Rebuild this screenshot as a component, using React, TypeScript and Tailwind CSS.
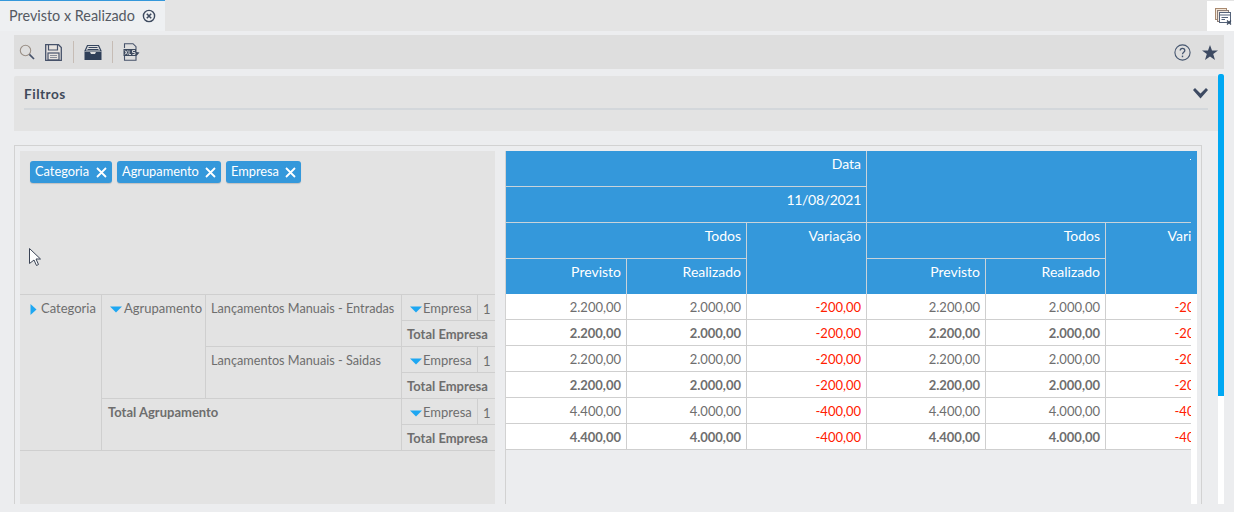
import React from 'react';

const lineCell = 'border-r border-b border-[#cfcfcf]';

function TriRight() {
    return <svg width="7" height="11" viewBox="0 0 7 11" className="inline-block shrink-0"><path d="M0.5 0 L6.5 5.5 L0.5 11 Z" fill="#1ea7f2" /></svg>;
}

function TriDown() {
    return <svg width="12" height="7" viewBox="0 0 12 7" className="inline-block shrink-0"><path d="M0 0.5 H12 L6 6.5 Z" fill="#1ea7f2" /></svg>;
}

function Tag({ label, width }: { label: string; width: string }) {
    return (
        <div className={`${width} h-[22px] flex items-center justify-between pl-[5px] pr-[5px] rounded-[3px] bg-[#3498db] text-white text-[12.8px] shadow-[0_1px_1px_rgba(0,0,0,0.15)]`}>
            <span>{label}</span>
            <svg width="11" height="11" viewBox="0 0 11 11"><path d="M1 1 L10 10 M10 1 L1 10" stroke="#fff" strokeWidth="1.8" /></svg>
        </div>
    );
}

function PivotEmpresa() {
    return (
        <>
            <td className={`${lineCell} pl-[8px] align-top pt-[6px]`}>
                <div className="flex items-center gap-[1px] h-[16px]"><TriDown /><span>Empresa</span></div>
            </td>
            <td className="border-b border-[#cfcfcf] pl-[5px] align-top pt-[6px]"><div className="h-[16px] leading-[16px]">1</div></td>
        </>
    );
}

function TotalEmpresa() {
    return <td colSpan={2} className="border-b border-[#cfcfcf] pl-[5px] align-top pt-[5px] font-bold whitespace-nowrap overflow-hidden"><div className="h-[16px] leading-[16px]">Total Empresa</div></td>;
}

const rows = [
    { p: '2.200,00', r: '2.000,00', v: '-200,00', bold: false },
    { p: '2.200,00', r: '2.000,00', v: '-200,00', bold: true },
    { p: '2.200,00', r: '2.000,00', v: '-200,00', bold: false },
    { p: '2.200,00', r: '2.000,00', v: '-200,00', bold: true },
    { p: '4.400,00', r: '4.000,00', v: '-400,00', bold: false },
    { p: '4.400,00', r: '4.000,00', v: '-400,00', bold: true },
];

export default function App() {
    const head = 'border-r border-b border-[#c9d3da] text-right align-top pr-[5px] pt-[2px] font-normal';
    const head4 = 'border-r border-[#c9d3da] text-right align-top pr-[5px] pt-[2px] font-normal';
    const data = `${lineCell} text-right pr-[5px] align-top pt-[4px] whitespace-nowrap`;

    return (
        <div className="w-[1234px] h-[512px] overflow-hidden bg-[#ecedef] text-[#6e6e6e] text-[13px] font-['Lato','Open_Sans',sans-serif]">
            {/* Tabs */}
            <div className="h-[31px] flex justify-between bg-[#e4e4e4]">
                <div className="w-[165px] h-[31px] bg-[#eef0f2] border-t border-[#3498db] flex items-center pl-[9px] gap-[7px] text-[14.4px] text-[#555a63]">
                    <span>Previsto x Realizado</span>
                    <svg width="14" height="14" viewBox="0 0 14 14"><circle cx="7" cy="7" r="5.6" fill="none" stroke="#3d4a5f" strokeWidth="1.4" /><path d="M4.8 4.8 L9.2 9.2 M9.2 4.8 L4.8 9.2" stroke="#3d4a5f" strokeWidth="1.6" /></svg>
                </div>
                <div className="w-[27px] h-[30px] mt-px bg-white flex items-center pl-[8px]">
                    <svg width="17" height="17" viewBox="0 0 17 17" fill="none">
                        <rect x="0.5" y="0.5" width="11" height="11" fill="#f3e6d8" stroke="#a8896f" />
                        <rect x="2.5" y="2.5" width="11" height="11" fill="#efe5dc" stroke="#8d7f78" />
                        <rect x="4.5" y="4.5" width="11" height="10" fill="#fff" stroke="#55637a" />
                        <path d="M4.5 7 H15.5 M6.5 9.5 H13 M6.5 11.5 H10" stroke="#55637a" />
                        <path d="M12 12.5 L16 16.5 M16 12.5 L12 16.5" stroke="#3d4a5f" strokeWidth="1.3" />
                    </svg>
                </div>
            </div>

            {/* Toolbar */}
            <div className="mt-[4px] ml-[14px] w-[1210px] h-[34px] bg-[#dedede] flex items-center pl-[5px] pr-[6px]">
                <svg width="16" height="16" viewBox="0 0 16 16" fill="none"><circle cx="6.5" cy="6.5" r="5.2" stroke="#9a8f86" strokeWidth="1.1" /><path d="M10.4 10.4 L15 15" stroke="#46526a" strokeWidth="1.7" /></svg>
                <svg width="17" height="17" viewBox="0 0 17 17" fill="none" className="ml-[10px]">
                    <path d="M0.7 0.7 H13.5 L16.3 3.5 V16.3 H0.7 Z" stroke="#46526a" strokeWidth="1.3" fill="#e8e4e0" />
                    <path d="M3.5 1 V6 H12.5 V1" stroke="#46526a" strokeWidth="1.2" />
                    <rect x="3" y="9" width="11" height="7" stroke="#46526a" strokeWidth="1.2" />
                    <path d="M5 11.5 H12 M5 13.5 H12" stroke="#8a8f9a" />
                </svg>
                <div className="w-px h-[22px] bg-[#c6bcb5] ml-[11px]"></div>
                <svg width="18" height="15" viewBox="0 0 18 15" className="ml-[10px]">
                    <path d="M3.5 0.5 H14.5 L17 6 H1 Z" fill="none" stroke="#36465f" strokeWidth="1.2" />
                    <path d="M4.5 2.5 H13.5 M3.5 4.5 H14.5" stroke="#36465f" strokeWidth="1.1" />
                    <path d="M0.5 7 H6 L7 9 H11 L12 7 H17.5 V15 H0.5 Z" fill="#2f3f58" />
                </svg>
                <div className="w-px h-[22px] bg-[#c6bcb5] ml-[10px]"></div>
                <svg width="17" height="18" viewBox="0 0 17 18" fill="none" className="ml-[10px]">
                    <path d="M1.5 5 V0.7 H10 L13 3.7 V6 M13 13 V17.3 H1.5 V13" stroke="#46526a" strokeWidth="1.1" />
                    <path d="M0.5 6 H13.5 V9 L16.5 9.5 L13.5 13 H0.5 Z" fill="#3d4a5f" />
                    <path d="M2 7.5 L4.5 11.5 M4.5 7.5 L2 11.5 M6 7.5 V11.5 H8 M12 7.5 H9.5 V9.5 H12 V11.5 H9.5" stroke="#e4e4e4" strokeWidth="0.9" />
                </svg>
                <div className="ml-auto flex items-center gap-[11px]">
                    <svg width="17" height="17" viewBox="0 0 17 17" fill="none"><circle cx="8.5" cy="8.5" r="7.6" stroke="#46566f" strokeWidth="1.1" /><path d="M6.2 6.6 C6.2 3.7 10.8 3.7 10.8 6.4 C10.8 8.2 8.5 8.2 8.5 10.2" stroke="#46566f" strokeWidth="1.3" /><rect x="7.8" y="11.6" width="1.4" height="1.6" fill="#46566f" /></svg>
                    <svg width="16" height="15" viewBox="0 0 16 15"><path d="M8 0 L10 5.5 H16 L11.2 9 L13 15 L8 11.4 L3 15 L4.8 9 L0 5.5 H6 Z" fill="#3d4a62" /></svg>
                </div>
            </div>

            <div className="mt-[5px] ml-[14px] flex">
                <div className="w-[1204px]">
                    {/* Filtros */}
                    <div className="mt-[2px] h-[55px] bg-[#e3e3e3] rounded-t-[2px] pl-[10px] pr-[10px] pt-[10px]">
                        <div className="h-[24px] border-b-[2px] border-[#d3d7db] flex justify-between text-[#3f4a5a] font-bold text-[13.6px] tracking-[0.5px]">
                            <span className="leading-[16px]">Filtros</span>
                            <svg width="15" height="11" viewBox="0 0 15 11" className="mt-[2px]"><path d="M0 2 L2 0 L7.5 5.5 L13 0 L15 2 L7.5 10.5 Z" fill="#3d4a62" /></svg>
                        </div>
                    </div>

                    {/* Pivot */}
                    <div className="mt-[14px] w-[1188px] h-[359px] border-l border-r border-t border-[#d2d2d2] pt-[5px] pl-[5px] flex">
                        <div className="relative w-[475px] h-[353px] bg-[#e3e3e3] shrink-0">
                            <div className="h-[144px] pt-[10px] pl-[10px] flex items-start gap-[5px] border-b border-[#cfcfcf]">
                                <Tag label="Categoria" width="w-[82px]" />
                                <Tag label="Agrupamento" width="w-[104px]" />
                                <Tag label="Empresa" width="w-[75px]" />
                            </div>
                            {/* mouse cursor in the shot */}
                            <svg width="13" height="19" viewBox="0 0 13 19" className="absolute left-[9px] top-[97px]"><path d="M0.5 0.5 L11.5 11 H7 L9.5 16.5 L7.5 17.5 L5 12 L0.5 15.5 Z" fill="#fff" stroke="#3a4354" /></svg>
                            <table className="table-fixed border-separate border-spacing-0 w-[475px]">
                                <colgroup>
                                    <col className="w-[82px]" />
                                    <col className="w-[104px]" />
                                    <col className="w-[196px]" />
                                    <col className="w-[76px]" />
                                    <col className="w-[17px]" />
                                </colgroup>
                                <tbody>
                                    <tr className="h-[26px]">
                                        <td rowSpan={6} className={`${lineCell} align-top pl-[10px] pt-[6px]`}>
                                            <div className="flex items-center gap-[4px] h-[16px]"><TriRight /><span>Categoria</span></div>
                                        </td>
                                        <td rowSpan={4} className={`${lineCell} align-top pl-[8px] pt-[6px]`}>
                                            <div className="flex items-center gap-[2px] h-[16px] whitespace-nowrap"><TriDown /><span>Agrupamento</span></div>
                                        </td>
                                        <td rowSpan={2} className={`${lineCell} align-top pl-[5px] pt-[4px] whitespace-nowrap text-[12.7px]`}>Lançamentos Manuais - Entradas</td>
                                        <PivotEmpresa />
                                    </tr>
                                    <tr className="h-[26px]"><TotalEmpresa /></tr>
                                    <tr className="h-[26px]">
                                        <td rowSpan={2} className={`${lineCell} align-top pl-[5px] pt-[4px] whitespace-nowrap text-[12.7px]`}>Lançamentos Manuais - Saidas</td>
                                        <PivotEmpresa />
                                    </tr>
                                    <tr className="h-[26px]"><TotalEmpresa /></tr>
                                    <tr className="h-[26px]">
                                        <td colSpan={2} rowSpan={2} className={`${lineCell} align-top pl-[6px] pt-[4px] font-bold`}>Total Agrupamento</td>
                                        <PivotEmpresa />
                                    </tr>
                                    <tr className="h-[26px]"><TotalEmpresa /></tr>
                                </tbody>
                            </table>
                        </div>

                        {/* Values */}
                        <div className="ml-[10px] w-[692px] h-[353px] border-l border-[#d2d2d2] flex shrink-0">
                            <div className="w-[685px] overflow-hidden">
                                <table className="relative table-fixed border-separate border-spacing-0 w-[720px] text-[14px]">
                                    <colgroup>
                                        <col className="w-[121px]" />
                                        <col className="w-[120px]" />
                                        <col className="w-[120px]" />
                                        <col className="w-[119px]" />
                                        <col className="w-[120px]" />
                                        <col className="w-[120px]" />
                                    </colgroup>
                                    <thead className="bg-[#3498db] text-white">
                                        <tr className="h-[36px]">
                                            <th colSpan={3} className={head}>Data</th>
                                            <th colSpan={3} rowSpan={2} className="border-b border-[#c9d3da]">
                                                <span className="absolute left-[684px] top-[8px] w-px h-px bg-white"></span>
                                            </th>
                                        </tr>
                                        <tr className="h-[36px]">
                                            <th colSpan={3} className={`${head} tracking-[-0.3px]`}>11/08/2021</th>
                                        </tr>
                                        <tr className="h-[36px]">
                                            <th colSpan={2} className={head}>Todos</th>
                                            <th rowSpan={2} className={head4}>Variação</th>
                                            <th colSpan={2} className={head}>Todos</th>
                                            <th rowSpan={2} className={head4}>Variação</th>
                                        </tr>
                                        <tr className="h-[35px]">
                                            <th className={head4}>Previsto</th>
                                            <th className={head4}>Realizado</th>
                                            <th className={head4}>Previsto</th>
                                            <th className={head4}>Realizado</th>
                                        </tr>
                                    </thead>
                                    <tbody className="bg-white text-[13px]">
                                        {rows.map((r, i) => (
                                            <tr key={i} className={`h-[26px] ${r.bold ? 'font-bold' : ''}`}>
                                                <td className={data}>{r.p}</td>
                                                <td className={data}>{r.r}</td>
                                                <td className={`${data} font-normal text-[#ff2000]`}>{r.v}</td>
                                                <td className={data}>{r.p}</td>
                                                <td className={data}>{r.r}</td>
                                                <td className={`${data} font-normal text-[#ff2000]`}>{r.v}</td>
                                            </tr>
                                        ))}
                                    </tbody>
                                </table>
                            </div>
                            <div className="w-[6px] flex flex-col">
                                <div className="h-[143px] bg-[#3498db]"></div>
                                <div className="flex-1 bg-white"></div>
                            </div>
                        </div>
                    </div>
                </div>

                {/* Scrollbar */}
                <div className="w-[6px] h-[430px] bg-white">
                    <div className="h-[322px] bg-[#00a8f3] rounded-t-[2px]"></div>
                </div>
            </div>
        </div>
    );
}
